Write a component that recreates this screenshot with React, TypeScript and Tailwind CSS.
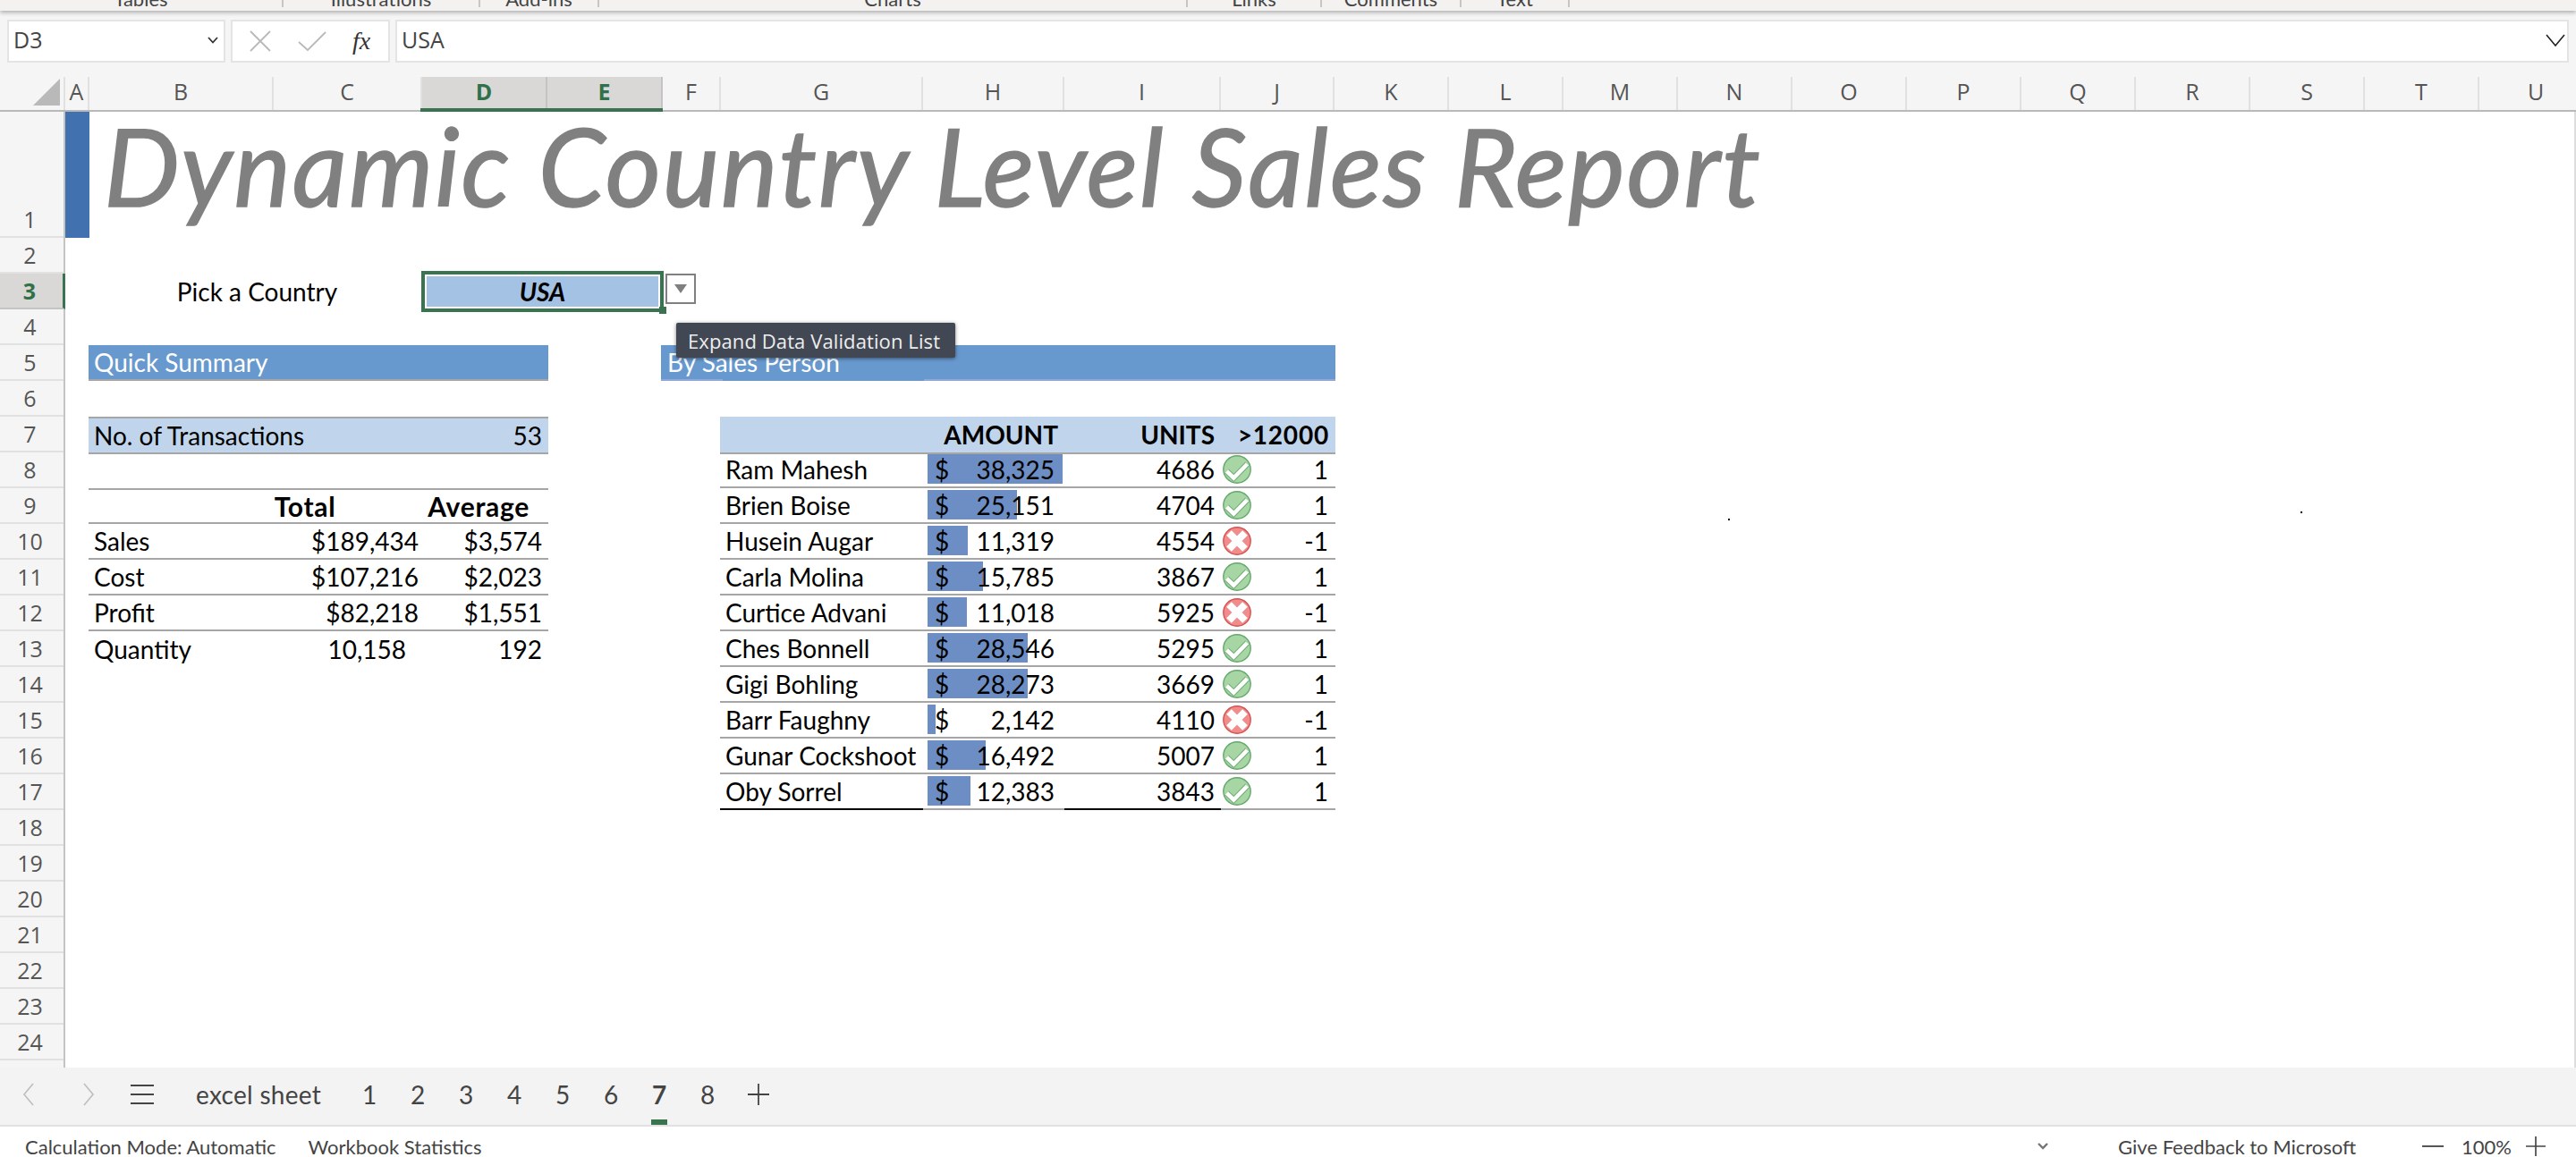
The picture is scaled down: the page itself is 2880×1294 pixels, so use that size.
import React from "react";

const COLS = "grid grid-cols-[27px_206px_166px_140px_129px_65px_226px_158px_175px_127px_repeat(11,128px)]";
const LINE = "border-b-2 border-[#a6a6a6]";

const ribbon = [
  ["Tables", 317],
  ["Illustrations", 220],
  ["Add-ins", 133],
  ["Charts", 658],
  ["Links", 150],
  ["Comments", 156],
  ["Text", 121],
] as const;

const columnHeads: [string, number][] = [
  ["A", 27], ["B", 206], ["C", 166], ["D", 140], ["E", 129], ["F", 65], ["G", 226], ["H", 158], ["I", 175], ["J", 127],
  ["K", 128], ["L", 128], ["M", 128], ["N", 128], ["O", 128], ["P", 128], ["Q", 128], ["R", 128], ["S", 128], ["T", 128], ["U", 128],
];

const people = [
  { name: "Ram Mahesh", amount: "38,325", bar: 151, units: 4686, ok: true },
  { name: "Brien Boise", amount: "25,151", bar: 100, units: 4704, ok: true },
  { name: "Husein Augar", amount: "11,319", bar: 45, units: 4554, ok: false },
  { name: "Carla Molina", amount: "15,785", bar: 62, units: 3867, ok: true },
  { name: "Curtice Advani", amount: "11,018", bar: 44, units: 5925, ok: false },
  { name: "Ches Bonnell", amount: "28,546", bar: 112, units: 5295, ok: true },
  { name: "Gigi Bohling", amount: "28,273", bar: 112, units: 3669, ok: true },
  { name: "Barr Faughny", amount: "2,142", bar: 9, units: 4110, ok: false },
  { name: "Gunar Cockshoot", amount: "16,492", bar: 65, units: 5007, ok: true },
  { name: "Oby Sorrel", amount: "12,383", bar: 48, units: 3843, ok: true },
];

const summary = [
  { label: "Sales", total: "$189,434", avg: "$3,574" },
  { label: "Cost", total: "$107,216", avg: "$2,023" },
  { label: "Profit", total: "$82,218", avg: "$1,551" },
];

function StatusIcon({ ok }: { ok: boolean }) {
  return ok ? (
    <svg width="32" height="32" viewBox="0 0 32 32" className="shrink-0">
      <circle cx="16" cy="16" r="15.2" fill="#a8d5a4" stroke="#62a96b" strokeWidth="1.4" />
      <polyline points="4.5,18 12.3,25.5 27.5,10" fill="none" stroke="#6fae76" strokeWidth="6.6" />
      <polyline points="4.5,18 12.3,25.5 27.5,10" fill="none" stroke="#ffffff" strokeWidth="4.6" />
    </svg>
  ) : (
    <svg width="32" height="32" viewBox="0 0 32 32" className="shrink-0">
      <circle cx="16" cy="16" r="15.2" fill="#f08c8c" stroke="#d6534f" strokeWidth="1.4" />
      <path d="M7 7 L25 25 M25 7 L7 25" fill="none" stroke="#ffffff" strokeWidth="8" />
    </svg>
  );
}

function Chevron({ dir, className }: { dir: "left" | "right"; className?: string }) {
  return (
    <svg width="14" height="28" viewBox="0 0 14 28" className={className}>
      <polyline points={dir === "left" ? "12,2 2,14 12,26" : "2,2 12,14 2,26"} fill="none" stroke="#bdbdbd" strokeWidth="1.6" />
    </svg>
  );
}

function Plus({ size }: { size: number }) {
  return (
    <svg width={size} height={size} viewBox="0 0 24 24">
      <path d="M12 0 V24 M0 12 H24" stroke="#444444" strokeWidth="1.8" fill="none" />
    </svg>
  );
}

export default function App() {
  const rowNums = Array.from({ length: 24 }, (_, i) => i + 1);
  return (
    <div className="flex h-[1294px] w-[2880px] flex-col overflow-hidden bg-white font-['Lato','Liberation_Sans',sans-serif] text-black">
      {/* ribbon remnant */}
      <div className="relative z-10 flex h-[12px] shrink-0 items-start overflow-hidden bg-[#f3f2f1] shadow-[0_2px_5px_rgba(0,0,0,0.3)]">
        {ribbon.map(([label, w]) => (
          <div key={label} style={{ width: w }} className="flex h-[8px] shrink-0 items-end justify-center overflow-hidden border-r-2 border-[#c8c6c4]">
            <span className="translate-y-[2px] whitespace-nowrap text-[22px] leading-[22px] text-[#444]">{label}</span>
          </div>
        ))}
      </div>

      {/* formula bar */}
      <div className="flex h-[74px] shrink-0 gap-[6px] bg-[#f5f5f5] px-[8px] pt-[10px] pb-[16px] font-['Open_Sans',sans-serif] text-[#444]">
        <div className="flex w-[244px] items-center justify-between border-2 border-[#e4e4e4] bg-white pr-[6px] pb-[2px] pl-[5px] text-[25px]">
          <span>D3</span>
          <svg width="12" height="8" viewBox="0 0 12 8"><polyline points="1,1 6,6.5 11,1" fill="none" stroke="#333" strokeWidth="1.8" /></svg>
        </div>
        <div className="flex w-[178px] items-center border-2 border-[#e4e4e4] bg-white pl-[18px]">
          <svg width="26" height="26" viewBox="0 0 26 26"><path d="M2 2 L24 24 M24 2 L2 24" stroke="#b9b9b9" strokeWidth="1.8" fill="none" /></svg>
          <svg width="34" height="24" viewBox="0 0 34 24" className="ml-[28px]"><polyline points="2,13 12,22 32,2" stroke="#b9b9b9" strokeWidth="1.8" fill="none" /></svg>
          <span className="ml-[28px] font-['Liberation_Serif',serif] text-[28px] italic text-[#333]">fx</span>
        </div>
        <div className="flex flex-1 items-center justify-between border-2 border-[#e4e4e4] bg-white pr-[2px] pb-[2px] pl-[5px] text-[25px]">
          <span>USA</span>
          <svg width="22" height="14" viewBox="0 0 22 14"><polyline points="1,1 11,13 21,1" fill="none" stroke="#222" strokeWidth="1.6" /></svg>
        </div>
      </div>

      {/* column headers */}
      <div className="flex h-[39px] shrink-0 border-b-2 border-[#b9b9b9] bg-[#f5f5f5] font-['Open_Sans',sans-serif] text-[25px] leading-[33px] text-[#555]">
        <div className="flex w-[73px] shrink-0 items-end justify-end border-r-2 border-[#e1e1e1] pr-[4px] pb-[5px]">
          <svg width="30" height="30" viewBox="0 0 30 30"><polygon points="0,30 30,0 30,30" fill="#b9b9b9" /></svg>
        </div>
        {columnHeads.map(([c, w]) => {
          const sel = c === "D" || c === "E";
          return (
            <div
              key={c}
              style={{ width: w }}
              className={
                sel
                  ? "relative shrink-0 border-r-2 border-[#c4c4c4] bg-[#d9d8d6] text-center font-bold text-[#31714a]"
                  : "shrink-0 border-r-2 border-[#e1e1e1] text-center"
              }
            >
              {c}
              {sel && <span className="absolute -right-[2px] -bottom-[2px] left-[-2px] h-[4px] bg-[#3a7350]" />}
            </div>
          );
        })}
      </div>

      {/* sheet */}
      <div className="relative flex min-h-0 flex-1 overflow-hidden border-r-2 border-[#dddddd]">
        <div className="flex w-[73px] shrink-0 flex-col border-r-2 border-[#c4c4c4] bg-[#f5f5f5] font-['Open_Sans',sans-serif] text-[25px] text-[#555]">
          {rowNums.map((n) => (
            <div
              key={n}
              className={
                n === 1
                  ? "flex h-[141px] shrink-0 items-end justify-center border-b-2 border-[#e1e1e1] pr-[4px] leading-[38px]"
                  : n === 3
                    ? "relative -mr-[2px] flex h-[40px] shrink-0 items-center justify-center border-r-[3px] border-b-2 border-r-[#3a7350] border-b-[#c4c4c4] bg-[#d9d8d6] pt-[2px] pr-[4px] font-bold text-[#31714a]"
                    : "flex h-[40px] shrink-0 items-center justify-center border-b-2 border-[#e1e1e1] pt-[2px] pr-[4px]"
              }
            >
              {n}
            </div>
          ))}
        </div>

        <div className="min-w-0 flex-1 text-[28px] leading-[38px]">
          {/* row 1 */}
          <div className={`${COLS} h-[141px]`}>
            <div className="bg-[#4271b0]" />
            <div className="col-span-9 whitespace-nowrap pl-[16px] text-[120px] leading-[120px] tracking-[1.8px] text-[#808080] italic [-webkit-text-stroke:1.5px_#808080]">
              Dynamic Country Level Sales Report
            </div>
          </div>
          <div className="h-[40px]" />
          {/* row 3 */}
          <div className={`${COLS} h-[40px]`}>
            <div />
            <div className="col-span-2 flex items-center justify-center pl-[3px]">Pick a Country</div>
            <div className="relative col-span-2">
              <div className="absolute -inset-x-[1px] -inset-y-[3px] z-10 border-[4px] border-[#3a7350] bg-white p-[2px]">
                <div className="flex h-full items-center justify-center bg-[#a4c2e4] font-bold italic">USA</div>
              </div>
              <span className="absolute -right-[4px] -bottom-[5px] z-20 h-[8px] w-[8px] bg-[#3a7350]" />
              <button className="absolute top-0 -right-[37px] z-10 flex h-[34px] w-[34px] items-center justify-center border-2 border-[#808080] bg-white">
                <svg width="14" height="10" viewBox="0 0 14 10"><polygon points="0,0 14,0 7,10" fill="#7f7f7f" /></svg>
              </button>
              <div className="absolute top-[55px] left-[284px] z-30 flex h-[39px] w-[312px] items-center rounded-[2px] bg-[#414753] pl-[13px] font-['Open_Sans',sans-serif] text-[22px] tracking-[0.1px] whitespace-nowrap text-[#eeeeee] shadow-[0_1px_4px_rgba(0,0,0,0.5)]">
                Expand Data Validation List
              </div>
            </div>
          </div>
          <div className="h-[40px]" />
          {/* row 5 */}
          <div className={`${COLS} h-[40px] text-white`}>
            <div />
            <div className={`col-span-3 -mx-[1px] flex items-center bg-[#6899ce] pl-[6px] ${LINE}`}>Quick Summary</div>
            <div />
            <div className="relative col-span-5 -mr-[1px] -ml-[2px] flex items-center border-b-2 border-[#8fa8d9] bg-[#6899ce] pl-[7px]">
              By Sales Person
              <span className="absolute -bottom-[2px] left-[69px] h-[2px] w-[225px] bg-[#6899ce]" />
            </div>
          </div>
          <div className="h-[40px]" />
          {/* row 7 */}
          <div className={`${COLS} h-[40px]`}>
            <div />
            <div className={`col-span-3 -mx-[1px] flex items-center justify-between border-t-2 bg-[#c0d5eb] pr-[7px] pl-[6px] ${LINE}`}>
              <span>No. of Transactions</span>
              <span>53</span>
            </div>
            <div className="col-span-2" />
            <div className={`col-span-2 -ml-[1px] flex items-center justify-end bg-[#c0d5eb] pr-[7px] font-bold ${LINE}`}>AMOUNT</div>
            <div className={`flex items-center justify-end bg-[#c0d5eb] pr-[7px] font-bold ${LINE}`}>UNITS</div>
            <div className={`-mr-[1px] flex items-center justify-end bg-[#c0d5eb] pr-[7px] font-bold tracking-[0.8px] ${LINE}`}>&gt;12000</div>
          </div>

          {/* rows 8 - 17: two tables side by side */}
          <div className={COLS}>
            <div />
            <div className="col-span-3 -mx-[1px] flex flex-col">
              <div className="h-[40px]" />
              <div className={`flex h-[40px] items-center justify-end border-t-2 text-[30px] font-bold tracking-[0.7px] ${LINE}`}>
                <span className="mr-[103px]">Total</span>
                <span className="mr-[21px]">Average</span>
              </div>
              {summary.map((r) => (
                <div key={r.label} className={`grid h-[40px] grid-cols-[207px_162px_145px] items-center ${LINE}`}>
                  <span className="pl-[6px]">{r.label}</span>
                  <span className="text-right">{r.total}</span>
                  <span className="pr-[7px] text-right">{r.avg}</span>
                </div>
              ))}
              <div className="grid h-[40px] grid-cols-[207px_148px_159px] items-center">
                <span className="pl-[6px]">Quantity</span>
                <span className="text-right">10,158</span>
                <span className="pr-[7px] text-right">192</span>
              </div>
            </div>
            <div className="col-span-2" />
            <div className="col-span-4 -mx-[1px] flex flex-col">
              {people.map((p, i) => {
                const last = i === people.length - 1;
                return (
                  <div key={p.name} className="grid h-[40px] grid-cols-[227px_158px_175px_128px]">
                    <div className={`flex items-center pl-[6px] whitespace-nowrap ${last ? "border-b-2 border-black" : LINE}`}>{p.name}</div>
                    <div className={`relative flex items-center justify-between pr-[11px] pl-[13px] ${LINE}`}>
                      <span style={{ width: p.bar }} className="absolute top-[2px] left-[5px] h-[33px] bg-[#6c8ec4]" />
                      <span className="relative">$</span>
                      <span className="relative">{p.amount}</span>
                    </div>
                    <div className={`flex items-center justify-end pr-[7px] ${last ? "border-b-2 border-black" : LINE}`}>{p.units}</div>
                    <div className={`flex items-center justify-between pr-[8px] pl-[2px] ${LINE}`}>
                      <StatusIcon ok={p.ok} />
                      <span>{p.ok ? "1" : "-1"}</span>
                    </div>
                  </div>
                );
              })}
            </div>
          </div>
        </div>

        {/* stray specks on the canvas */}
        <span className="absolute top-[455px] left-[1932px] h-[2px] w-[2px] bg-black" />
        <span className="absolute top-[447px] left-[2572px] h-[2px] w-[2px] bg-black" />
      </div>

      {/* sheet tabs */}
      <div className="flex h-[66px] shrink-0 items-center border-b-2 border-[#e1e1e1] bg-[#f3f3f3] pb-[5px] text-[28px] text-[#444]">
        <Chevron dir="left" className="ml-[25px]" />
        <Chevron dir="right" className="ml-[53px]" />
        <svg width="26" height="24" viewBox="0 0 26 24" className="ml-[40px]">
          <path d="M0 2 H26 M0 12 H26 M0 22 H26" stroke="#444" strokeWidth="1.8" fill="none" />
        </svg>
        <span className="ml-[47px] w-[167px] shrink-0 tracking-[0.3px]">excel sheet</span>
        {["1", "2", "3", "4", "5", "6", "7", "8"].map((t) => (
          <div key={t} className={t === "7" ? "relative flex h-full w-[54px] shrink-0 items-center justify-center font-bold" : "flex h-full w-[54px] shrink-0 items-center justify-center"}>
            {t}
            {t === "7" && <span className="absolute -bottom-[5px] left-[18px] h-[6px] w-[18px] bg-[#3a7350]" />}
          </div>
        ))}
        <div className="ml-[18px]"><Plus size={24} /></div>
      </div>

      {/* status bar */}
      <div className="flex h-[34px] shrink-0 items-center bg-white pt-[10px] pr-[34px] pl-[28px] text-[22px] text-[#444]">
        <span>Calculation Mode: Automatic</span>
        <span className="ml-[36px]">Workbook Statistics</span>
        <svg width="12" height="8" viewBox="0 0 12 8" className="mr-[78px] ml-auto"><polyline points="1,1 6,6 11,1" fill="none" stroke="#777" strokeWidth="2.4" /></svg>
        <span>Give Feedback to Microsoft</span>
        <span className="ml-[74px] h-[2px] w-[24px] bg-[#555]" />
        <span className="ml-[20px]">100%</span>
        <div className="ml-[16px]"><Plus size={22} /></div>
      </div>
    </div>
  );
}
